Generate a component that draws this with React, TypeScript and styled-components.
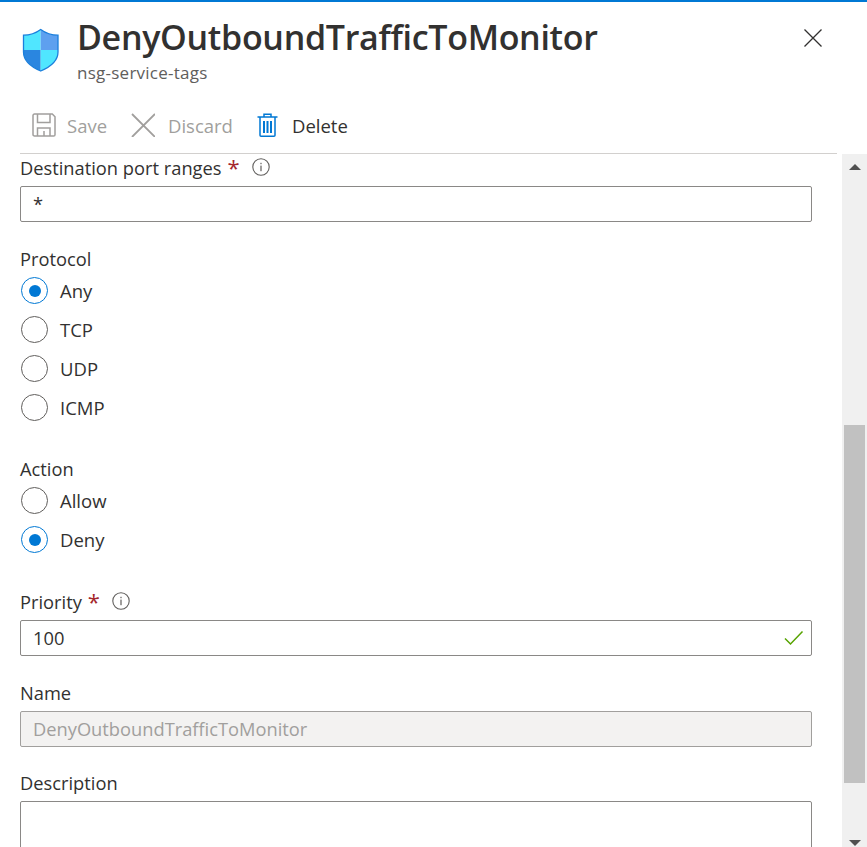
import React from 'react';
import styled, { createGlobalStyle } from 'styled-components';

const Global = createGlobalStyle`
  html, body { margin: 0; padding: 0; background: #fff; overflow: hidden; }
  * { box-sizing: border-box; }
  body { font-family: "Open Sans", "Noto Sans", "Liberation Sans", sans-serif; color: #323130; }
`;
const Blade = styled.div`
  width: 867px; height: 847px; display: flex; flex-direction: column; overflow: hidden;
  border-top: 2px solid #0078d4; background: #fff;
`;
const Header = styled.header`
  height: 88px; display: flex; align-items: flex-start; padding: 0 44px 0 22px; flex: none;
`;
const ShieldBox = styled.div`width: 40px; height: 48px; margin-top: 25px; flex: none;`;
const Titles = styled.div`margin-left: 15px; flex: 1;`;
const Title = styled.h1`
  margin: 9px 0 0; font-size: 34px; line-height: 52px; font-weight: 600; letter-spacing: -0.3px; color: #323130;
`;
const Subtitle = styled.div`font-size: 17px; line-height: 22px; letter-spacing: 0.25px; color: #605e5c; margin-top: -1px;`;
const CloseBtn = styled.div`width: 20px; height: 20px; margin-top: 26px; flex: none;`;
const Toolbar = styled.div`
  height: 64px; margin: 0 30px 0 20px; padding: 7px 0 0 12px; border-bottom: 1px solid #d2d0ce;
  display: flex; align-items: center; flex: none;
`;
const ToolBtn = styled.div<{ $disabled?: boolean; $gap: number; $w: number }>`
  display: flex; align-items: center; gap: ${p => p.$gap}px; width: ${p => p.$w}px;
  font-size: 18.5px; color: ${p => (p.$disabled ? '#a19f9d' : '#323130')};
`;
const Main = styled.div`flex: 1; display: flex; min-height: 0;`;
const Form = styled.div`flex: 1; padding: 0 30px 0 20px;`;
const Label = styled.div<{ $top: number }>`
  display: flex; align-items: center; height: 26px; margin-top: ${p => p.$top}px;
  font-size: 18.3px; color: #323130;
`;
const Required = styled.span`color: #a4262c; margin-left: 6px; font-size: 22px; line-height: 26px;`;
const Info = styled.svg<{ $left: number }>`margin-left: ${p => p.$left}px; flex: none;`;
const Input = styled.div<{ $disabled?: boolean; $tall?: boolean }>`
  height: ${p => (p.$tall ? '90px' : '36px')}; margin-top: 6px; border: 1px solid ${p => (p.$disabled ? '#a19f9d' : '#8a8886')};
  border-radius: 2px; padding: 0 7px 2px 12px; display: flex; align-items: center; justify-content: space-between;
  font-size: 18.3px; color: ${p => (p.$disabled ? '#a19f9d' : '#323130')};
  background: ${p => (p.$disabled ? '#f3f2f1' : '#fff')};
`;
const RadioGroup = styled.div`
  display: flex; flex-direction: column;
`;
const RadioRow = styled.div`
  display: flex; align-items: center; height: 39px; gap: 12px; padding-left: 1px; font-size: 18.5px;
`;
const Ring = styled.span<{ $on?: boolean }>`
  width: 27px; height: 27px; border-radius: 50%; flex: none; display: flex; align-items: center; justify-content: center;
  border: 1.3px solid ${p => (p.$on ? '#0078d4' : '#605e5c')};
  &::after { content: ''; width: 12px; height: 12px; border-radius: 50%; background: ${p => (p.$on ? '#0078d4' : 'transparent')}; }
`;
const Check = styled.svg`flex: none; margin-top: 2px;`;
const Scrollbar = styled.div`
  width: 25px; background: #f0f0f0; flex: none; display: flex; flex-direction: column; align-items: center;
`;
const Arrow = styled.div<{ $down?: boolean }>`
  width: 0; height: 0; border-left: 6px solid transparent; border-right: 6px solid transparent;
  ${p => (p.$down ? 'border-top: 6px solid #505050;' : 'border-bottom: 6px solid #505050;')}
`;
const Thumb = styled.div`width: 21px; height: 358px; margin-top: 258px; background: #c1c1c1; flex: none;`;
const ArrowUpBox = styled.div`height: 13px; padding-top: 10px; flex: none;`;
const ArrowDownBox = styled.div`margin-top: 57px; flex: none;`;

const InfoIcon = ({ left }: { left: number }) => (
  <Info $left={left} width="18" height="18" viewBox="0 0 18 18" fill="none">
    <circle cx="9" cy="9" r="8.2" stroke="#605e5c" strokeWidth="1.1" />
    <rect x="8.4" y="7.6" width="1.2" height="5.6" fill="#605e5c" />
    <rect x="8.4" y="4.8" width="1.2" height="1.4" fill="#605e5c" />
  </Info>
);
const Radio = ({ on, label }: { on?: boolean; label: string }) => (
  <RadioRow><Ring $on={on} />{label}</RadioRow>
);

const shieldPath = 'M1.500 8.200C8 8.200 14 6 18.700 2.500 23.500 6 29.500 8.200 36 8.200V25C36 34 27 40.500 18.700 44 10.500 40.500 1.500 34 1.500 25Z';
const Shield = () => (
  <svg width="40" height="48" viewBox="0 0 40 48">
    <defs>
      <clipPath id="sh"><path d={shieldPath} /></clipPath>
    </defs>
    <g clipPath="url(#sh)">
      <rect x="0" y="0" width="18.700" height="23" fill="#50e6ff" />
      <rect x="18.700" y="0" width="20" height="23" fill="#5ea0ef" />
      <rect x="0" y="23" width="18.700" height="24" fill="#2a86e0" />
      <rect x="18.700" y="23" width="20" height="24" fill="#50e6ff" />
    </g>
    <path d={shieldPath} fill="none" stroke="#1b7fdc" strokeWidth="1.300" />
  </svg>
);

export default function App() {
  return (
    <>
      <Global />
      <Blade>
        <Header>
          <ShieldBox><Shield /></ShieldBox>
          <Titles>
            <Title>DenyOutboundTrafficToMonitor</Title>
            <Subtitle>nsg-service-tags</Subtitle>
          </Titles>
          <CloseBtn>
            <svg width="20" height="20" viewBox="0 0 20 20"><path d="M1.500 1.500l17 17M18.500 1.500l-17 17" stroke="#323130" strokeWidth="1.300" /></svg>
          </CloseBtn>
        </Header>
        <Toolbar>
          <ToolBtn $disabled $gap={11} $w={99}>
            <svg width="24" height="24" viewBox="0 0 24 24" fill="none" stroke="#a19f9d" strokeWidth="1.500">
              <path d="M1 2.500C1 1.600 1.600 1 2.500 1h17.800L23 3.700v18c0 .7-.6 1.300-1.300 1.300H2.500C1.600 23 1 22.400 1 21.500Z" />
              <path d="M5.500 1v8.500h12.500V1M5.500 23v-8h12.500v8M12 18v5" />
            </svg>
            Save
          </ToolBtn>
          <ToolBtn $disabled $gap={13} $w={126}>
            <svg width="24" height="24" viewBox="0 0 24 24"><path d="M1 1l23 23M24 1L1 24" stroke="#a19f9d" strokeWidth="1.800" /></svg>
            Discard
          </ToolBtn>
          <ToolBtn $gap={14} $w={110}>
            <svg width="21" height="24" viewBox="0 0 21 24" fill="none" stroke="#0078d4" strokeWidth="1.500">
              <path d="M.500 4h20M7 4V1.200h7V4M3 4v18.200c0 .6.400 1 1 1h13c.6 0 1-.4 1-1V4" />
              <path d="M7 8v12M10.500 8v12M14 8v12" strokeWidth="2" />
            </svg>
            Delete
          </ToolBtn>
        </Toolbar>
        <Main>
          <Form>
            <Label $top={0}>Destination port ranges<Required>*</Required><InfoIcon left={12} /></Label>
            <Input>*</Input>
            <Label $top={23}>Protocol</Label>
            <RadioGroup>
              <Radio on label="Any" />
              <Radio label="TCP" />
              <Radio label="UDP" />
              <Radio label="ICMP" />
            </RadioGroup>
            <Label $top={28}>Action</Label>
            <RadioGroup>
              <Radio label="Allow" />
              <Radio on label="Deny" />
            </RadioGroup>
            <Label $top={29}>Priority<Required>*</Required><InfoIcon left={12} /></Label>
            <Input>
              100
              <Check width="20" height="16" viewBox="0 0 20 16" fill="none"><path d="M1 8.500l5.500 5.500L18.500 1.500" stroke="#57a300" strokeWidth="1.500" /></Check>
            </Input>
            <Label $top={23}>Name</Label>
            <Input $disabled>DenyOutboundTrafficToMonitor</Input>
            <Label $top={22}>Description</Label>
            <Input $tall />
          </Form>
          <Scrollbar>
            <ArrowUpBox><Arrow /></ArrowUpBox>
            <Thumb />
            <ArrowDownBox><Arrow $down /></ArrowDownBox>
          </Scrollbar>
        </Main>
      </Blade>
    </>
  );
}
